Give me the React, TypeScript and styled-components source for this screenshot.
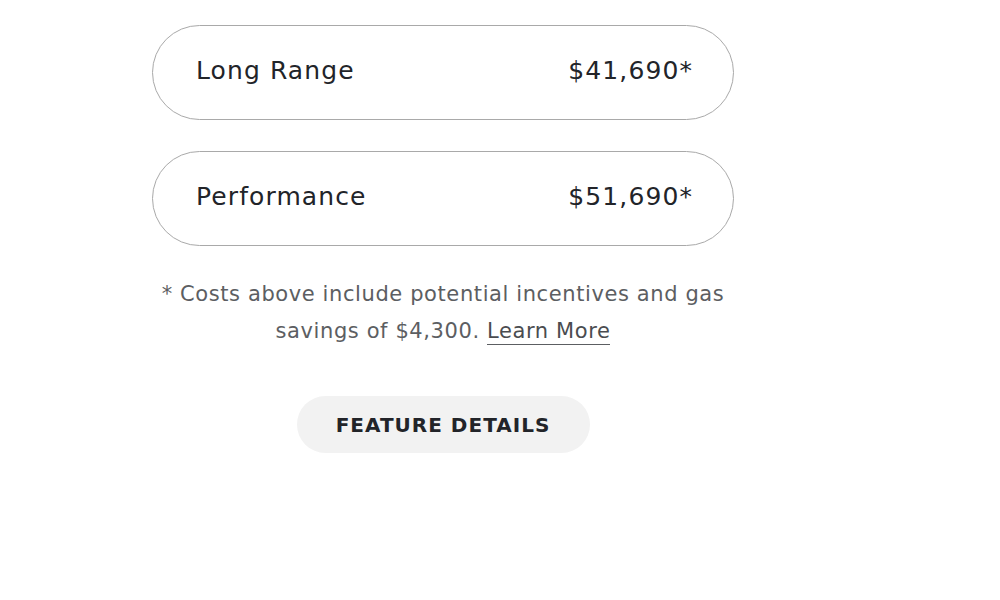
import React from "react";
import styled, { createGlobalStyle } from "styled-components";

const Global = createGlobalStyle`
  html, body { margin: 0; padding: 0; background: #fff; }
  body { font-family: "DejaVu Sans", "Noto Sans", sans-serif; -webkit-font-smoothing: antialiased; }
`;

const Page = styled.div`
  width: 1000px;
  height: 600px;
  padding: 25px 0 0 152px;
  box-sizing: border-box;
`;

const Column = styled.div`
  width: 582px;
  display: flex;
  flex-direction: column;
  align-items: center;
`;

const Options = styled.div`
  width: 100%;
  display: flex;
  flex-direction: column;
  gap: 31px;
`;

const Option = styled.button`
  width: 100%;
  height: 95px;
  box-sizing: border-box;
  border: 1.5px solid #a9a9a9;
  border-radius: 48px;
  background: #fff;
  display: flex;
  align-items: center;
  justify-content: space-between;
  padding: 0 40px 4px 43px;
  font-family: inherit;
  font-size: 25px;
  letter-spacing: 1.1px;
  color: #222429;
  cursor: pointer;
`;

const Label = styled.span``;

const Price = styled.span``;

const Note = styled.p`
  margin: 30px 0 0;
  text-align: center;
  font-size: 21px;
  line-height: 37px;
  letter-spacing: 0.6px;
  color: #5c5e62;
  width: 100%;
`;

const NoteLink = styled.a`
  color: #4a4c50;
  text-decoration: none;
  border-bottom: 1.5px solid #5c5e62;
  padding-bottom: 1px;
`;

const DetailsButton = styled.button`
  margin-top: 46px;
  width: 293px;
  height: 57px;
  border: none;
  border-radius: 29px;
  background: #f2f2f2;
  font-family: inherit;
  font-size: 20px;
  font-weight: 700;
  letter-spacing: 1px;
  color: #222429;
  cursor: pointer;
`;

export default function App() {
  return (
    <>
      <Global />
      <Page>
        <Column>
          <Options>
            <Option>
              <Label>Long Range</Label>
              <Price>$41,690*</Price>
            </Option>
            <Option>
              <Label>Performance</Label>
              <Price>$51,690*</Price>
            </Option>
          </Options>
          <Note>
            * Costs above include potential incentives and gas
            <br />
            savings of $4,300. <NoteLink href="#">Learn More</NoteLink>
          </Note>
          <DetailsButton>FEATURE DETAILS</DetailsButton>
        </Column>
      </Page>
    </>
  );
}
